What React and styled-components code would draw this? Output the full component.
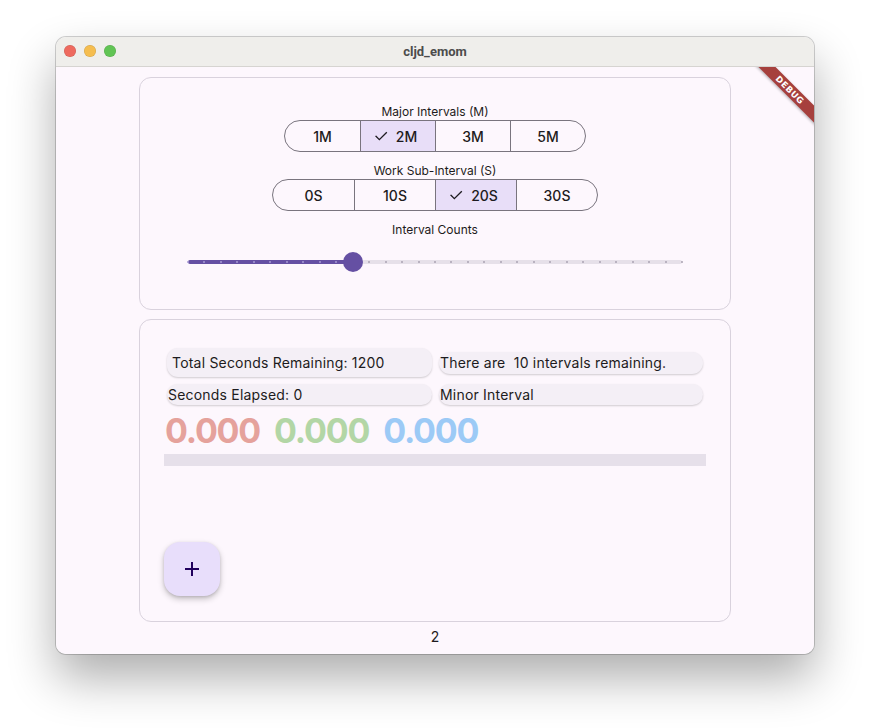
import React, { useState } from "react"
import styled, { createGlobalStyle } from "styled-components"

const GlobalStyle = createGlobalStyle`
  html, body {
    margin: 0;
    padding: 0;
    background: #ffffff;
  }
  body {
    font-family: Inter, "Noto Sans", sans-serif;
    -webkit-font-smoothing: antialiased;
  }
`

const MAJORS = ["1M", "2M", "3M", "5M"]
const MINORS = ["0S", "10S", "20S", "30S"]
const DIVISIONS = 30

function Check() {
  return (
    <svg width="16" height="16" viewBox="0 0 24 24" fill="none">
      <path d="M4.5 12.5l5 5L20 7" stroke="#1d1b20" strokeWidth="2" strokeLinecap="square" />
    </svg>
  )
}

function Segmented({ options, value, onChange, segWidth }) {
  return (
    <SegRow>
      {options.map((opt) => (
        <Segment
          key={opt}
          $active={opt === value}
          $width={segWidth}
          onClick={() => onChange(opt)}
        >
          {opt === value && <Check />}
          {opt}
        </Segment>
      ))}
    </SegRow>
  )
}

function Slider({ value, max }) {
  const pct = (value / max) * 100
  const ticks = []
  for (let i = 0; i <= max; i++) {
    ticks.push(<Tick key={i} $on={i < value} style={{ left: `${(i / max) * 100}%` }} />)
  }
  return (
    <SliderWrap>
      <Track>
        <ActiveTrack style={{ width: `${pct}%` }} />
        {ticks}
        <Thumb style={{ left: `${pct}%` }} />
      </Track>
    </SliderWrap>
  )
}

export default function App() {
  const [major, setMajor] = useState("2M")
  const [minor, setMinor] = useState("20S")
  const count = 10

  return (
    <>
      <GlobalStyle />
      <Stage>
        <Window>
          <TitleBar>
            <Lights>
              <Light $c="#ee6a5f" />
              <Light $c="#f5bd4f" />
              <Light $c="#61c454" />
            </Lights>
            <Title>cljd_emom</Title>
          </TitleBar>
          <Content>
            <Banner>DEBUG</Banner>
            <SettingsCard>
              <Caption>Major Intervals (M)</Caption>
              <Segmented options={MAJORS} value={major} onChange={setMajor} segWidth={75} />
              <Caption $top={11}>Work Sub-Interval (S)</Caption>
              <Segmented options={MINORS} value={minor} onChange={setMinor} segWidth={81} />
              <Caption $top={11}>Interval Counts</Caption>
              <Slider value={count} max={DIVISIONS} />
            </SettingsCard>
            <TimerCard>
              <InfoGrid>
                <InfoChip $pad>Total Seconds Remaining: 1200</InfoChip>
                <InfoChip $inset>There are &nbsp;10 intervals remaining.</InfoChip>
                <InfoChip>Seconds Elapsed: 0</InfoChip>
                <InfoChip>Minor Interval</InfoChip>
              </InfoGrid>
              <Readouts>
                <Readout $c="#e5a29c">0.000</Readout>
                <Readout $c="#b3d6a6">0.000</Readout>
                <Readout $c="#9ccaf6">0.000</Readout>
              </Readouts>
              <Progress />
              <Fab aria-label="add">
                <svg width="24" height="24" viewBox="0 0 24 24">
                  <path d="M12 5v14M5 12h14" stroke="#21005d" strokeWidth="2" />
                </svg>
              </Fab>
            </TimerCard>
            <Footer>2</Footer>
          </Content>
        </Window>
      </Stage>
    </>
  )
}

const Stage = styled.div`
  width: 870px;
  height: 728px;
  padding: 37px 0 0 56px;
  box-sizing: border-box;
`

const Window = styled.div`
  width: 758px;
  height: 617px;
  border-radius: 10px;
  overflow: hidden;
  display: flex;
  flex-direction: column;
  box-shadow: 0 0 0 1px rgba(0, 0, 0, 0.18), 0 24px 48px rgba(0, 0, 0, 0.32);
`

const TitleBar = styled.div`
  position: relative;
  height: 29px;
  flex: none;
  background: #efeeeb;
  border-bottom: 1px solid #d6d4d1;
  display: flex;
  align-items: center;
  justify-content: center;
`

const Lights = styled.div`
  position: absolute;
  left: 8px;
  top: 8px;
  display: flex;
  gap: 8px;
`

const Light = styled.span`
  width: 12px;
  height: 12px;
  border-radius: 50%;
  background: ${(p) => p.$c};
  box-shadow: inset 0 0 0 0.5px rgba(0, 0, 0, 0.15);
`

const Title = styled.div`
  font-family: Roboto, Inter, sans-serif;
  font-weight: 700;
  font-size: 13px;
  color: #4c4c4c;
`

const Content = styled.div`
  position: relative;
  flex: 1;
  background: #fdf7fd;
  overflow: hidden;
  display: flex;
  flex-direction: column;
  align-items: center;
  padding-top: 10px;
`

const Banner = styled.div`
  position: absolute;
  top: 17px;
  right: -38px;
  width: 124px;
  height: 12px;
  line-height: 12px;
  transform: rotate(45deg);
  background: #a6403d;
  color: #fff;
  font-family: "DejaVu Sans", sans-serif;
  font-weight: 900;
  font-size: 8.5px;
  letter-spacing: 0.6px;
  text-align: center;
  box-shadow: 0 1px 3px rgba(0, 0, 0, 0.3);
`

const Card = styled.div`
  width: 592px;
  box-sizing: border-box;
  border: 1px solid #d9d2dd;
  border-radius: 12px;
  display: flex;
  flex-direction: column;
`

const SettingsCard = styled(Card)`
  height: 233px;
  align-items: center;
  padding-top: 26px;
`

const Caption = styled.div`
  margin-top: ${(p) => p.$top || 0}px;
  font-size: 12px;
  line-height: 16px;
  color: #1d1b20;
`

const SegRow = styled.div`
  display: flex;
  height: 32px;
  box-sizing: border-box;
  border: 1px solid #79747e;
  border-radius: 16px;
  overflow: hidden;
`

const Segment = styled.button`
  width: ${(p) => p.$width}px;
  height: 100%;
  border: none;
  border-left: 1px solid #79747e;
  &:first-child {
    border-left: none;
  }
  background: ${(p) => (p.$active ? "#e8def8" : "transparent")};
  display: flex;
  align-items: center;
  justify-content: center;
  gap: 7px;
  font-family: Inter, sans-serif;
  font-size: 14px;
  font-weight: 500;
  color: #1d1b20;
  padding: 0;
  cursor: pointer;
  svg {
    margin-left: -6px;
  }
`

const SliderWrap = styled.div`
  width: 494px;
  height: 20px;
  margin-top: 14px;
  display: flex;
  align-items: center;
`

const Track = styled.div`
  position: relative;
  width: 100%;
  height: 4px;
  border-radius: 2px;
  background: #e6e0e9;
`

const ActiveTrack = styled.div`
  position: absolute;
  left: 0;
  top: 0;
  height: 100%;
  border-radius: 2px;
  background: #6550a3;
`

const Tick = styled.span`
  position: absolute;
  top: 1px;
  width: 2px;
  height: 2px;
  margin-left: -1px;
  border-radius: 1px;
  background: ${(p) => (p.$on ? "#a699d3" : "#aaa3b2")};
`

const Thumb = styled.span`
  position: absolute;
  top: 50%;
  width: 20px;
  height: 20px;
  margin: -10px 0 0 -10px;
  border-radius: 50%;
  background: #6550a3;
`

const TimerCard = styled(Card)`
  height: 303px;
  margin-top: 9px;
  padding: 28px 24px 25px;
`

const InfoGrid = styled.div`
  display: grid;
  grid-template-columns: 265px 264px;
  grid-template-rows: 29px 21px;
  column-gap: 7px;
  row-gap: 7px;
  padding-left: 3px;
  align-items: center;
`

const InfoChip = styled.div`
  height: ${(p) => (p.$pad ? 29 : p.$inset ? 22 : 21)}px;
  display: flex;
  align-items: center;
  padding-left: ${(p) => (p.$pad ? 5 : 1)}px;
  border-radius: 11px;
  background: #f4eff6;
  box-shadow: 0 1px 2px rgba(0, 0, 0, 0.18);
  font-size: 14px;
  letter-spacing: 0.2px;
  color: #1d1b20;
  white-space: pre;
`

const Readouts = styled.div`
  display: flex;
  gap: 14px;
  margin-top: 4px;
  padding-left: 1px;
`

const Readout = styled.div`
  font-size: 34px;
  line-height: 44px;
  font-weight: 700;
  letter-spacing: -1.2px;
  color: ${(p) => p.$c};
`

const Progress = styled.div`
  height: 12px;
  margin-top: 1px;
  background: #e6e0ea;
`

const Fab = styled.button`
  width: 56px;
  height: 56px;
  margin-top: 76px;
  border: none;
  border-radius: 16px;
  background: #e8defb;
  display: flex;
  align-items: center;
  justify-content: center;
  box-shadow: 0 3px 6px rgba(0, 0, 0, 0.22), 0 1px 3px rgba(0, 0, 0, 0.12);
  cursor: pointer;
`

const Footer = styled.div`
  margin-top: 6px;
  font-size: 14px;
  line-height: 18px;
  color: #1d1b20;
`
